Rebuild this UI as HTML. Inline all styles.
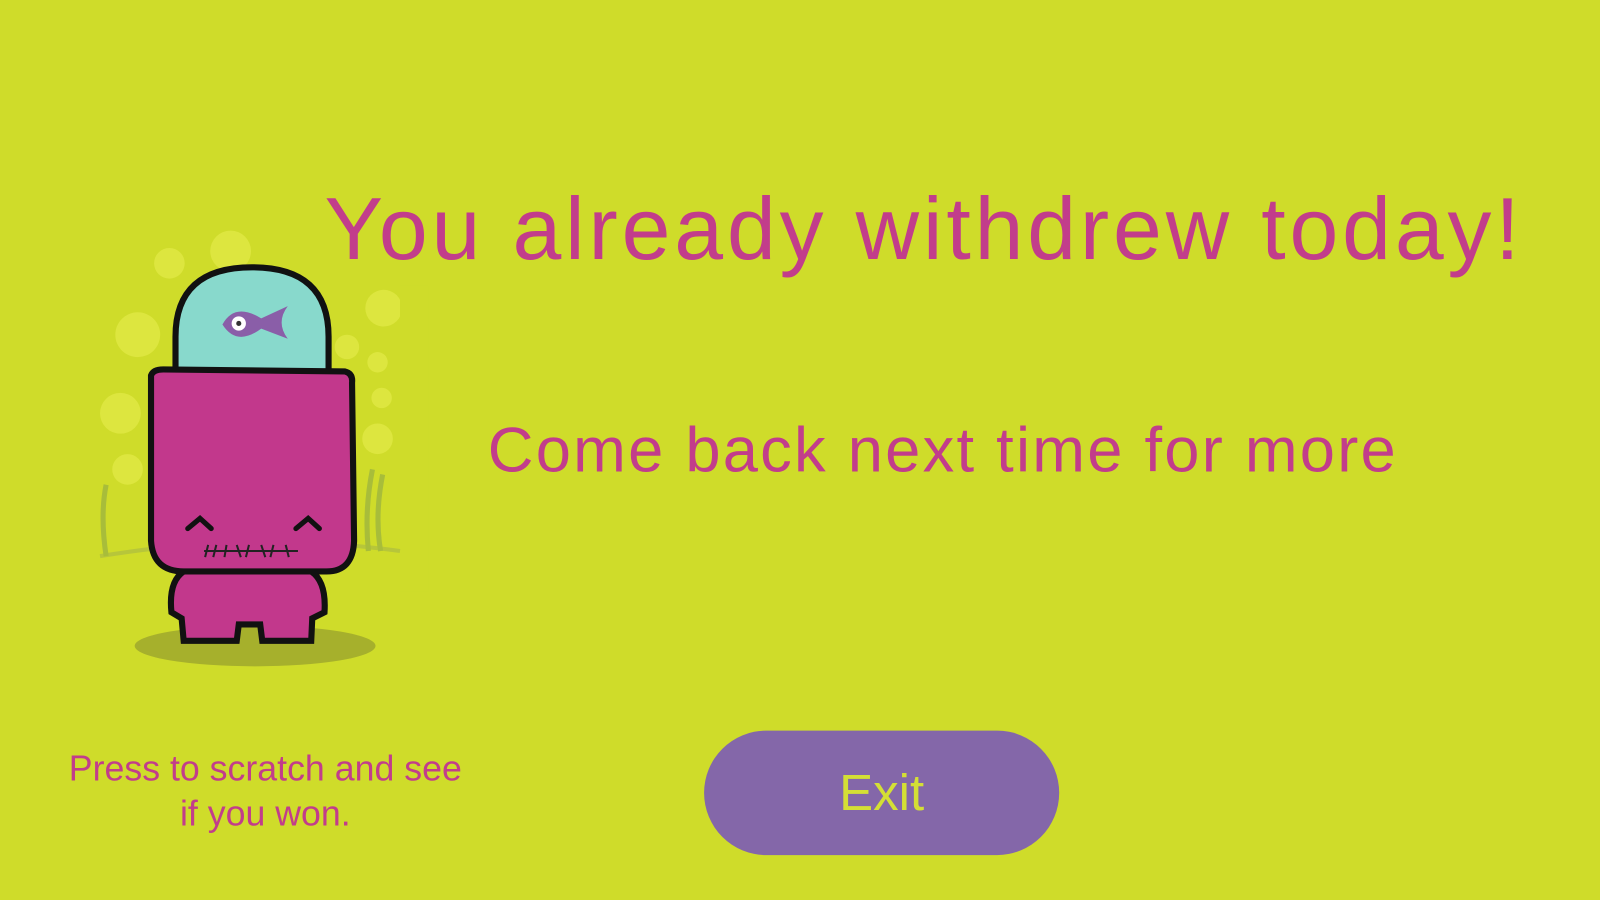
<!DOCTYPE html>
<html><head><meta charset="utf-8"><style>
html,body{margin:0;padding:0;width:1600px;height:900px;overflow:hidden;background:#cfdc2a}
#w{position:absolute;left:0;top:0;width:1568px;height:882px;transform:scale(1.020408);transform-origin:0 0;font-family:"Liberation Sans",sans-serif}
.t{position:absolute;color:#c23d8b;white-space:nowrap}
#btn{position:absolute;left:690px;top:716px;width:348px;height:122px;border-radius:61px;background:#8467a9;color:#d4df35;font-size:50px;text-align:center;line-height:122px}
</style></head><body><div id="w">
<svg style="position:absolute;left:0;top:0" width="420" height="700" viewBox="0 0 420 700">
<g fill="#dde63f">
<circle cx="166" cy="258" r="15"/><circle cx="226" cy="246" r="20"/><circle cx="135" cy="328" r="22"/><circle cx="376" cy="302" r="18"/><circle cx="340" cy="340" r="12"/><circle cx="370" cy="355" r="10"/><circle cx="374" cy="390" r="10"/><circle cx="118" cy="405" r="20"/><circle cx="125" cy="460" r="15"/><circle cx="370" cy="430" r="15"/>
</g>
<rect x="392" y="280" width="30" height="300" fill="#cfdc2a"/>
<path d="M98 545 Q250 520 392 540" stroke="#b7c63a" stroke-width="4" fill="none"/>
<path d="M104 475 q-6 30 0 70 M365 460 q-8 40 -4 80 M375 465 q-8 40 -2 75" stroke="#a8bd3a" stroke-width="5" fill="none"/>
<ellipse cx="250" cy="633" rx="118" ry="20" fill="#a6b02c"/>
<path d="M172 365 L172 330 Q172 262 247 262 Q322 262 322 330 L322 365 Z" fill="#88d9cc" stroke="#111" stroke-width="6"/>
<path d="M218 318 Q230 296 256 312 L282 300 Q270 316 282 332 L256 322 Q232 340 218 318Z" fill="#8a5ea8"/>
<circle cx="234" cy="317" r="7" fill="#fff"/><circle cx="234" cy="317" r="2.5" fill="#333"/>
<path d="M180 560 Q165 570 168 600 L178 606 L180 628 L232 628 L234 612 L255 612 L257 628 L305 628 L306 606 L318 600 Q320 570 305 560 Z" fill="#c2388c" stroke="#111" stroke-width="6"/>
<path d="M148 368 Q150 362 160 362 L338 364 Q346 366 345 375 L347 530 Q346 560 320 560 L180 560 Q150 560 148 530 Z" fill="#c2388c" stroke="#111" stroke-width="6"/>
<path d="M184 518 L196 508 L207 518 M290 518 L302 508 L313 518" stroke="#111" stroke-width="5" fill="none" stroke-linecap="round"/>
<path d="M200 540 L292 540 M204 534 l-3 12 M212 534 l-3 12 M222 534 l-2 12 M232 534 l4 12 M244 534 l-3 12 M256 534 l4 12 M268 534 l-3 12 M280 534 l3 12" stroke="#222" stroke-width="2" fill="none"/>
</svg>
<div class="t" style="left:318px;top:176px;font-size:86px;letter-spacing:3.8px">You already withdrew today!</div>
<div class="t" style="left:478px;top:406px;font-size:62px;letter-spacing:2.2px">Come back next time for more</div>
<div class="t" style="left:40px;top:732px;width:440px;text-align:center;font-size:35px;line-height:44px;white-space:normal">Press to scratch and see<br>if you won.</div>
<div id="btn">Exit</div>
</div></body></html>
